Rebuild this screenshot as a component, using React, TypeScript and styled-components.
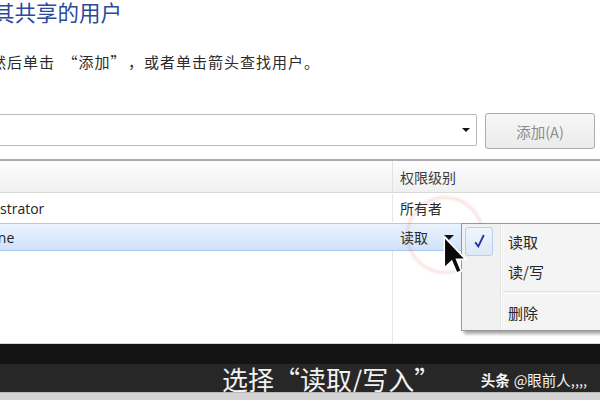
import React from "react";
import styled, { createGlobalStyle } from "styled-components";

const GlobalStyle = createGlobalStyle`
  html, body {
    margin: 0;
    padding: 0;
  }
  body {
    width: 600px;
    height: 400px;
    overflow: hidden;
    background: #fff;
    font-family: "Noto Sans CJK SC", sans-serif;
  }
`;

const Screen = styled.div`
  position: relative;
  width: 600px;
  height: 400px;
  overflow: hidden;
  display: flex;
  flex-direction: column;
  background: #fff;
`;

const Dialog = styled.div`
  flex: 1;
  min-height: 0;
  display: flex;
  flex-direction: column;
  margin-left: -80px;
`;

const Title = styled.div`
  margin-left: -13px;
  font-size: 21.5px;
  line-height: 24px;
  color: #2a4a9a;
  white-space: nowrap;
`;

const Instruction = styled.div`
  margin: 28px 0 0 -9px;
  font-size: 15px;
  letter-spacing: 1px;
  line-height: 20px;
  color: #2b2b2b;
  white-space: nowrap;
`;

// wide CJK quote mark: extra room on the outer side
const Quote = styled.span<{ $side: "open" | "close" }>`
  padding-left: ${(p) => (p.$side === "open" ? "0.5em" : "0")};
  padding-right: ${(p) => (p.$side === "close" ? "0.6em" : "0")};
`;

const InputRow = styled.div`
  display: flex;
  align-items: flex-start;
  gap: 8px;
  margin-top: 41px;
  padding-right: 5px;
`;

const Combo = styled.div`
  flex: 1;
  height: 32px;
  box-sizing: border-box;
  margin-top: 1px;
  border: 1px solid #b8b8b8;
  border-radius: 2px;
  display: flex;
  align-items: center;
  justify-content: flex-end;
  padding-right: 6px;
`;

const Arrow = styled.span<{ $size: number }>`
  width: 0;
  height: 0;
  border-left: ${(p) => p.$size}px solid transparent;
  border-right: ${(p) => p.$size}px solid transparent;
  border-top: ${(p) => Math.round(p.$size * 0.9)}px solid #151515;
`;

const AddButton = styled.button`
  width: 110px;
  height: 36px;
  box-sizing: border-box;
  border: 1px solid #ababab;
  border-radius: 3px;
  background: linear-gradient(#f7f7f7, #ebebeb);
  color: #8c8c8c;
  font-family: "Noto Sans CJK SC", sans-serif;
  font-size: 14.5px;
  display: flex;
  align-items: center;
  justify-content: center;
  padding: 0;
`;

const List = styled.div`
  flex: 1;
  display: flex;
  flex-direction: column;
  margin-top: 10px;
  border-top: 2px solid #ababab;
`;

const HeaderRow = styled.div`
  display: grid;
  grid-template-columns: 472px 1fr;
  height: 32px;
  box-sizing: border-box;
  border-bottom: 1px solid #dadada;
  background: linear-gradient(#fdfdfd, #f0f0f0);
`;

const HeaderCell = styled.div<{ $divider?: boolean }>`
  display: flex;
  align-items: center;
  padding-left: ${(p) => (p.$divider ? 7 : 34)}px;
  font-size: 14px;
  color: #3c3c3c;
  border-left: ${(p) => (p.$divider ? "1px solid #e2e2e2" : "none")};
`;

const Row = styled.div<{ $selected?: boolean }>`
  display: grid;
  grid-template-columns: 472px 1fr;
  height: ${(p) => (p.$selected ? 28 : 30)}px;
  box-sizing: border-box;
  border-top: 1px solid ${(p) => (p.$selected ? "#a9c9ef" : "transparent")};
  border-bottom: 1px solid ${(p) => (p.$selected ? "#a9c9ef" : "transparent")};
  background: ${(p) =>
    p.$selected ? "linear-gradient(#eaf3fe, #cfe2fb)" : "transparent"};
`;

const NameCell = styled.div`
  display: flex;
  align-items: center;
  padding-left: 34px;
  font-family: "Open Sans", "Noto Sans CJK SC", sans-serif;
  font-size: 14px;
  color: #222;
  white-space: nowrap;
`;

const PermCell = styled.div<{ $divider?: boolean }>`
  display: flex;
  align-items: center;
  gap: 16px;
  padding-left: 7px;
  font-size: 14px;
  color: #2a2a2a;
  border-left: 1px solid ${(p) => (p.$divider ? "#e6e6e6" : "transparent")};
`;

const Filler = styled.div`
  flex: 1;
  display: grid;
  grid-template-columns: 472px 1fr;
`;

const Ring = styled.div`
  position: absolute;
  left: 406px;
  top: 196px;
  width: 72px;
  height: 72px;
  border: 3px solid rgba(232, 110, 110, 0.2);
  border-radius: 50%;
  filter: blur(1px);
`;

const Menu = styled.div`
  position: absolute;
  left: 461px;
  top: 223px;
  width: 170px;
  box-sizing: border-box;
  padding: 2px 0 5px;
  border: 1px solid #979797;
  background: linear-gradient(90deg, #f1f1f1 0 38px, #e2e3e3 38px 39px, #fff 39px 40px, #f4f4f4 40px);
  box-shadow: 3px 3px 3px rgba(0, 0, 0, 0.35);
  display: flex;
  flex-direction: column;
`;

const MenuItem = styled.div<{ $h: number }>`
  display: flex;
  align-items: center;
  height: ${(p) => p.$h}px;
`;

const Gutter = styled.div`
  width: 40px;
  height: 100%;
  display: flex;
  align-items: center;
  padding-left: 3px;
  box-sizing: border-box;
`;

const CheckBox = styled.div`
  width: 28px;
  height: 29px;
  box-sizing: border-box;
  border: 1px solid #b3cfee;
  border-radius: 3px;
  background: linear-gradient(#eef5fd, #dde9f7);
  display: flex;
  align-items: center;
  justify-content: center;
`;

const ItemText = styled.span`
  padding-left: 6px;
  font-size: 15px;
  color: #262626;
`;

const Separator = styled.div`
  margin: 5px 0 5px 41px;
  height: 1px;
  border-top: 1px solid #e0e0e0;
  border-bottom: 1px solid #fff;
`;

const Cursor = styled.svg`
  position: absolute;
  left: 443px;
  top: 236px;
`;

const BottomBar = styled.div`
  height: 57px;
  box-sizing: border-box;
  border-top: 1px solid #d8d8d8;
  display: flex;
  flex-direction: column;
  background: #141414;
`;

const TopBand = styled.div`
  height: 20px;
  background: #141414;
`;

const CaptionBand = styled.div`
  height: 28px;
  background: #272727;
  display: flex;
  align-items: center;
  padding: 2px 13px 0 222px;
  box-sizing: border-box;
  color: #f2f2f2;
  white-space: nowrap;
`;

const Caption = styled.span`
  font-size: 26px;
  line-height: 28px;
`;

const Watermark = styled.span`
  margin-left: auto;
  font-size: 14.5px;
  color: #f4f4f4;
  b {
    font-weight: 700;
    margin-right: 4px;
  }
`;

const Footer = styled.div`
  height: 8px;
  background: linear-gradient(#b6b6b6 0 1px, #d3d3d3 1px);
`;

export default function App() {
  return (
    <Screen lang="zh-CN">
      <GlobalStyle />
      <Dialog>
        <Title>选择要与其共享的用户</Title>
        <Instruction>
          键入名称，然后单击<Quote $side="open">“</Quote>添加
          <Quote $side="close">”</Quote>，或者单击箭头查找用户。
        </Instruction>
        <InputRow>
          <Combo>
            <Arrow $size={4} />
          </Combo>
          <AddButton>添加(A)</AddButton>
        </InputRow>
        <List>
          <HeaderRow>
            <HeaderCell>名称</HeaderCell>
            <HeaderCell $divider>权限级别</HeaderCell>
          </HeaderRow>
          <Row>
            <NameCell>Administrator</NameCell>
            <PermCell $divider>所有者</PermCell>
          </Row>
          <Row $selected>
            <NameCell>Everyone</NameCell>
            <PermCell>
              读取
              <Arrow $size={5} />
            </PermCell>
          </Row>
          <Filler>
            <div />
            <PermCell $divider />
          </Filler>
        </List>
      </Dialog>
      <BottomBar>
        <TopBand />
        <CaptionBand>
          <Caption>选择“读取/写入”</Caption>
          <Watermark>
            <b>头条</b>@眼前人,,,,
          </Watermark>
        </CaptionBand>
        <Footer />
      </BottomBar>

      <Ring />
      <Menu>
        <MenuItem $h={30}>
          <Gutter>
            <CheckBox>
              <svg width="11" height="14" viewBox="0 0 11 14">
                <path d="M1.2 8.2 L4.3 12.4 L9.8 1" fill="none" stroke="#2b2d9c" strokeWidth="1.8" />
              </svg>
            </CheckBox>
          </Gutter>
          <ItemText>读取</ItemText>
        </MenuItem>
        <MenuItem $h={30}>
          <Gutter />
          <ItemText>读/写</ItemText>
        </MenuItem>
        <Separator />
        <MenuItem $h={26}>
          <Gutter />
          <ItemText>删除</ItemText>
        </MenuItem>
      </Menu>
      <Cursor width="24" height="38" viewBox="0 0 12 19.5">
        <path
          d="M0.5 0.5 L0.5 16.5 L4.3 12.9 L6.9 19 L9.3 18 L6.8 12 L11.5 12 Z"
          fill="#0a0a0a"
          stroke="#fff"
          strokeWidth="0.8"
        />
      </Cursor>
    </Screen>
  );
}
